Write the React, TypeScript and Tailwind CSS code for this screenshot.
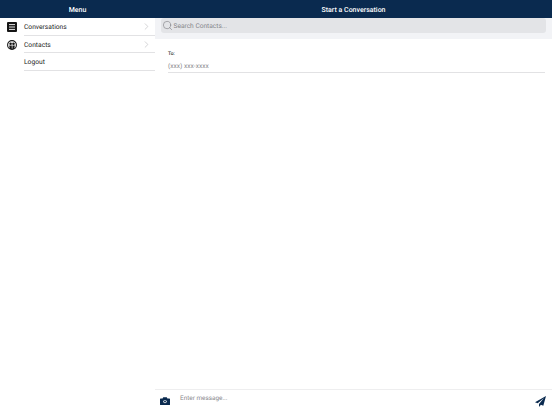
import type { ReactNode } from 'react';
import { ChevronRight, Search } from 'lucide-react';

const MenuRow = ({ label, icon, chevron }: { label: string; icon?: ReactNode; chevron?: boolean }) => (
  <div className="flex h-[17.7px] items-stretch">
    <div className="flex w-6 items-center justify-center">{icon}</div>
    <div className="flex flex-1 items-center justify-between border-b border-[#e2e2e4] pr-[3px]">
      <span className="pt-[2px] text-[6.7px] leading-none text-[#222]">{label}</span>
      {chevron && <ChevronRight className="h-[11px] w-[11px] text-[#b5b5b8]" strokeWidth={1.25} />}
    </div>
  </div>
);

const ListIcon = () => (
  <svg width="10" height="10" viewBox="0 0 10 10">
    <rect width="10" height="10" rx="1" fill="#151515" />
    <path d="M2 2.6h6M2 5h6M2 7.4h6" stroke="#fff" strokeWidth="0.9" />
  </svg>
);

const PeopleIcon = () => (
  <svg width="10" height="10" viewBox="0 0 10 10">
    <circle cx="5" cy="5" r="4.4" fill="#fff" stroke="#151515" strokeWidth="1.1" />
    <circle cx="3.6" cy="3.7" r="1.3" fill="#151515" />
    <circle cx="6.5" cy="3.7" r="1.3" fill="#151515" />
    <path d="M2.2 5.4h2.6v3.6H2.6zM5.4 5.4h2.4l-.4 3.6H5.4z" fill="#151515" />
  </svg>
);

const CameraIcon = () => (
  <svg width="10" height="8" viewBox="0 0 10 8">
    <path d="M0 2a.6.6 0 0 1 .6-.6h2L3.2.2h3.6l.6 1.2h2a.6.6 0 0 1 .6.6v5.4a.6.6 0 0 1-.6.6H.6a.6.6 0 0 1-.6-.6z" fill="#0a2a4f" />
    <circle cx="5" cy="4.6" r="1.7" fill="#fff" />
    <circle cx="5" cy="4.6" r="1" fill="#0a2a4f" />
  </svg>
);

const SendIcon = () => (
  <svg width="11" height="11" viewBox="0 0 11 11">
    <path d="M11 0 0 6.2l2.7 1.1L9 2 4 8v3l1.9-2.2 2.4 1z" fill="#0a2a4f" />
  </svg>
);

export default function App() {
  return (
    <div className="flex h-[414px] w-[552px] flex-col overflow-hidden bg-white font-['Roboto',sans-serif] [text-rendering:geometricPrecision]">
      <div className="flex h-[18px] shrink-0 items-center bg-[#0a2a4f] pt-[2px] text-[7px] font-medium leading-none text-white">
        <div className="w-[155px] text-center">Menu</div>
        <div className="flex-1 text-center">Start a Conversation</div>
      </div>
      <div className="flex min-h-0 flex-1">
        <div className="w-[155px] shrink-0">
          <MenuRow label="Conversations" icon={<ListIcon />} chevron />
          <MenuRow label="Contacts" icon={<PeopleIcon />} chevron />
          <MenuRow label="Logout" />
        </div>
        <div className="flex min-w-0 flex-1 flex-col">
          <div className="h-[21px] shrink-0 bg-[#f2f3f6] px-[6px] pb-[5px]">
            <div className="flex h-[15px] items-center rounded-[3px] bg-[#e3e4e7] pl-[1px]">
              <Search className="h-[11px] w-[11px] text-[#77777c]" strokeWidth={1.25} />
              <span className="ml-[0.5px] pt-[3px] text-[6.6px] text-[#85858a]">Search Contacts...</span>
            </div>
          </div>
          <div className="flex flex-1 flex-col pl-[13px] pr-[7px] pt-[12px]">
            <div className="text-[5px] font-medium text-[#333]">To:</div>
            <div className="mt-[1px] border-b border-[#e2e2e4] text-[6.6px] leading-[12px] text-[#8a8a8e]">(xxx) xxx-xxxx</div>
          </div>
          <div className="flex h-[25px] shrink-0 items-start border-t border-[#eeeeef] pl-[5px] pr-[6px]">
            <div className="mt-[7px]"><CameraIcon /></div>
            <span className="ml-[10px] mt-[4px] flex-1 text-[6.4px] text-[#8a8a8e]">Enter message...</span>
            <div className="mt-[6px]"><SendIcon /></div>
          </div>
        </div>
      </div>
    </div>
  );
}
